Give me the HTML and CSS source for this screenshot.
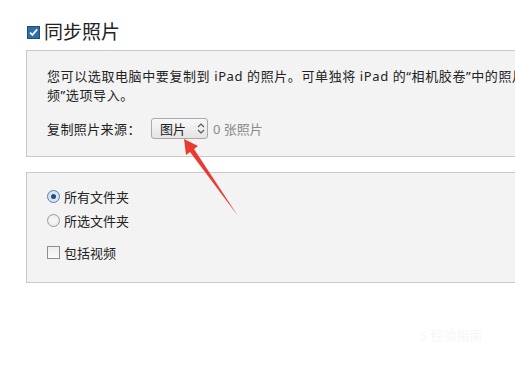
FILE: index.html
```html
<!DOCTYPE html>
<html lang="zh">
<head>
<meta charset="utf-8">
<link rel="stylesheet" href="styles.css">
</head>
<body>
<div class="page">
  <div class="title-row">
    <span class="cb cb-checked"><svg viewBox="0 0 13 13" width="13" height="13"><path d="M2.5 6.5 L5.2 9.5 L10.8 2.8" fill="none" stroke="#fff" stroke-width="2"/></svg></span>
    <span class="title">同步照片</span>
  </div>
  <div class="panel panel-top">
    <p class="desc">您可以选取电脑中要复制到 iPad 的照片。可单独将 iPad 的“相机胶卷”中的照片和视<br>频”选项导入。</p>
    <div class="source-row">
      <span class="label">复制照片来源：</span>
      <span class="select">图片<svg class="chev" viewBox="0 0 8 11" width="8" height="11"><path d="M1 4 L4 1 L7 4 M1 7 L4 10 L7 7" fill="none" stroke="#555" stroke-width="1.1"/></svg></span>
      <span class="count">0 张照片</span>
    </div>
  </div>
  <div class="panel panel-bottom">
    <div class="opt"><span class="radio radio-on"></span>所有文件夹</div>
    <div class="opt"><span class="radio"></span>所选文件夹</div>
    <div class="opt opt-video"><span class="cb"></span>包括视频</div>
  </div>
</div>
<svg class="arrow" width="515" height="383" viewBox="0 0 515 383">
  <path d="M184 139 L198 146 L194 149 L238 216 L190 152 L186 155 Z" fill="#ea3b33"/>
</svg>
<div class="watermark">S 经验指南</div>
</body>
</html>
```
FILE: styles.css
```css
html, body { margin: 0; padding: 0; }
body {
  background: #fff;
  width: 515px;
  height: 383px;
  overflow: hidden;
  position: relative;
  font-family: "Noto Sans", "Noto Sans CJK SC", sans-serif;
  color: #222;
}
.page { padding: 21px 0 0 26px; }
.title-row { display: flex; align-items: center; height: 22px; }
.cb {
  box-sizing: border-box;
  width: 13px; height: 13px;
  border: 1px solid #8f8f8f;
  background: linear-gradient(#eee, #fafafa);
  display: inline-block;
  flex: none;
}
.title-row .cb { margin-left: 1px; }
.cb-checked {
  background: #2f6fa8;
  border-color: #1f4f7e;
  display: flex; align-items: center; justify-content: center;
}
.cb-checked svg { display: block; }
.title { font-size: 19px; margin-left: 4px; color: #222; line-height: 22px; }
.panel {
  width: 600px;
  background: #f3f3f3;
  border: 1px solid #c9c9c9;
  box-sizing: border-box;
}
.panel-top { margin-top: 7px; height: 107px; padding: 16px 0 0 20px; }
.desc {
  margin: 0;
  font-size: 13px;
  line-height: 19px;
  letter-spacing: 0.6px;
  white-space: nowrap;
  color: #222;
}
.source-row { display: flex; align-items: center; margin-top: 13px; font-size: 13px; }
.label { width: 104px; letter-spacing: 0.4px; }
.select {
  box-sizing: border-box;
  height: 21px; width: 57px;
  border: 1px solid #a9a9a9;
  border-radius: 3px;
  background: linear-gradient(#f8f8f8, #e4e4e4);
  display: flex; align-items: center;
  padding-left: 8px;
  font-size: 13px;
}
.chev { margin-left: 11px; }
.count { color: #8a8a8a; margin-left: 5px; }
.panel-bottom { margin-top: 15px; height: 111px; padding: 11px 0 0 20px; }
.opt { display: flex; align-items: center; height: 24px; font-size: 13px; }
.opt-video { margin-top: 8px; }
.radio {
  box-sizing: border-box;
  width: 13px; height: 13px; border-radius: 50%;
  border: 1px solid #9a9a9a;
  background: radial-gradient(circle, #fafafa, #e6e6e6);
  margin-right: 4px;
  flex: none;
  display: flex; align-items: center; justify-content: center;
}
.radio-on { border-color: #5a7fa8; background: radial-gradient(circle, #eaf2fb, #c9d9ea); }
.radio-on::after {
  content: ""; width: 5px; height: 5px; border-radius: 50%;
  background: #1d4f86;
}
.opt .cb { margin-right: 4px; }
.arrow { position: absolute; left: 0; top: 0; pointer-events: none; }
.watermark {
  position: absolute; left: 420px; top: 325px;
  font-size: 13px; color: #f7f7f7;
}
```
